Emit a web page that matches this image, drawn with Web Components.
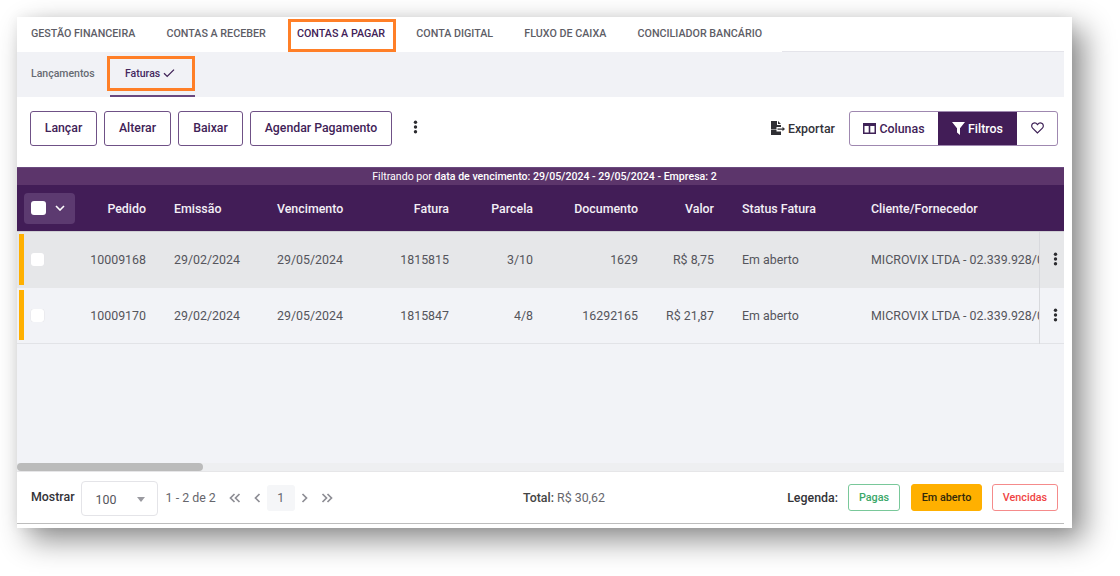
<!DOCTYPE html>
<html lang="pt-BR"><head><meta charset="utf-8"><title>Contas a pagar</title>
<style>
html,body{margin:0;padding:0;background:#fff;width:1120px;height:576px;overflow:hidden;font-family:Roboto,"Liberation Sans",sans-serif}
</style></head><body>
<app-page>
  <nav-tabs>
    <nav-tab>GESTÃO FINANCEIRA</nav-tab><nav-tab>CONTAS A RECEBER</nav-tab><nav-tab active>CONTAS A PAGAR</nav-tab><nav-tab>CONTA DIGITAL</nav-tab><nav-tab>FLUXO DE CAIXA</nav-tab><nav-tab>CONCILIADOR BANCÁRIO</nav-tab>
  </nav-tabs>
  <sub-tabs></sub-tabs>
  <tool-bar></tool-bar>
  <data-table></data-table>
  <page-footer></page-footer>
</app-page>
<script>
function def(name, css, html, init){
  customElements.define(name, class extends HTMLElement{
    constructor(){super();const r=this.attachShadow({mode:'open'});r.innerHTML='<style>'+css+'</style>'+html;}
    connectedCallback(){if(init)init.call(this,this.shadowRoot);}
  });
}
const kebab='<svg width="5" height="14" viewBox="0 0 5 14"><circle cx="2.5" cy="2.2" r="1.7" fill="#2c2c30"/><circle cx="2.5" cy="7" r="1.7" fill="#2c2c30"/><circle cx="2.5" cy="11.8" r="1.7" fill="#2c2c30"/></svg>';

def('app-page',`:host{display:flex;flex-direction:column;box-sizing:border-box;width:1055px;height:511px;margin:17px 0 0 17px;padding:0 8px 4px 0;background:#fff;box-shadow:12px 12px 28px rgba(0,0,0,.45),0 0 12px rgba(0,0,0,.06)}`,'<slot></slot>');

def('nav-tabs',`:host{display:flex;height:35px;box-sizing:border-box;flex:none}
.l{flex:1;border-bottom:1px solid #e4e4ea;}
.t{display:flex;padding-right:3px}`,'<div class="t"><slot></slot></div><div class="l"></div>');

def('nav-tab',`:host{display:flex;position:relative;align-items:center;padding:0 17.200px 3px 14px;font:500 10.720px Roboto,sans-serif;color:#5d5d66;white-space:nowrap;height:32px}
:host([active]){color:#3f2257}
:host([active])::after{content:"";position:absolute;left:5px;right:6px;top:2px;bottom:0;border:3px solid #ff7f27;box-sizing:border-box}`,'<slot></slot>');

def('sub-tabs',`:host{display:flex;height:45px;background:#f1f2f6;flex:none;font:500 10.500px Roboto,sans-serif;position:relative}
.a{color:#666a72;padding:0 0 3px 14px;display:flex;align-items:center;height:45px;width:93px;box-sizing:border-box}
.b{color:#45285f;display:flex;align-items:center;gap:3px;height:45px;width:85px;box-sizing:border-box;padding:0 0 3px 15px;position:relative}
.u{position:absolute;left:0;right:0;bottom:0;height:2px;background:#68487f}
.h{position:absolute;left:-3px;right:0;top:4px;height:35px;border:3px solid #ff7f27;box-sizing:border-box}`,
`<div class="a">Lançamentos</div><div class="b">Faturas <svg width="12" height="10" viewBox="0 0 12 10"><path d="M1 5.2 4.2 8.4 11 1.6" fill="none" stroke="#3f2257" stroke-width="1.3"/></svg><i class="h"></i><i class="u"></i></div>`);

def('act-btn',`:host{display:inline-flex;align-items:center;justify-content:center;height:35px;box-sizing:border-box;border:1px solid #6f5186;border-radius:3px;font:500 12.300px Roboto,sans-serif;color:#3f2257;background:#fff}`,'<slot></slot>');

def('tool-bar',`:host{display:flex;align-items:center;height:70px;flex:none;padding:0 6px 8px 13px;box-sizing:border-box}
.g{display:flex;gap:7px}
.k{margin-left:21px;display:flex;margin-top:-3px}
.s{flex:1}
.e{display:flex;align-items:center;gap:3px;font:500 12.400px Roboto,sans-serif;color:#33333a;margin-right:14px}
.grp{display:flex;height:35px;box-sizing:border-box;border:1px solid #9f88b0;border-radius:3px;overflow:hidden;font:500 12.400px Roboto,sans-serif;color:#3f2257}
.grp div{display:flex;align-items:center;justify-content:center;gap:3px}
.c{width:88px}.f{width:79px;background:#421d57;color:#fff}.h{width:40px}`,
`<div class="g"><act-btn style="width:67px">Lançar</act-btn><act-btn style="width:67px">Alterar</act-btn><act-btn style="width:65px">Baixar</act-btn><act-btn style="width:142px">Agendar Pagamento</act-btn></div>
<div class="k">${kebab}</div><div class="s"></div>
<div class="e"><svg width="14" height="14" viewBox="0 0 14 14"><path d="M0 0H6V4H10V6H5.500V8.500H0Z M7 0 10 3H7Z M0 9H5.500V10.500H10V14H0Z" fill="#2e2e33"/><path d="M6.500 7.500H11.500V5.800L14 8 11.500 10.200V8.700H6.500Z" fill="#2e2e33"/></svg>Exportar</div>
<div class="grp"><div class="c"><svg width="13" height="11" viewBox="0 0 13 11"><path fill-rule="evenodd" d="M0 0H13V11H0ZM1.500 3V9.500H5.700V3ZM7.300 3V9.500H11.500V3Z" fill="#3f2257"/></svg>Colunas</div>
<div class="f"><svg width="13" height="13" viewBox="0 0 13 13"><path d="M0 0H13L8 6.200V13L5 10.500V6.200Z" fill="#fff"/></svg>Filtros</div>
<div class="h"><svg width="13" height="12" viewBox="0 0 13 12"><path d="M6.500 11 1.600 6.100C.2 4.700.5 2.600 1.800 1.600 3.200.6 5.200.9 6.500 2.600 7.800.9 9.800.6 11.200 1.600 12.500 2.600 12.800 4.700 11.400 6.100Z" fill="none" stroke="#3f2257" stroke-width="1.200"/></svg></div></div>`);

const cols='59px 84px 103px 103px 97px 84px 105px 76px 129px 182px 25px';
const check=()=>`<span class="cb"></span>`;
function row(d,cls){
  return `<div class="row ${cls}"><i class="st"></i><div class="c sel">${check()}</div><div class="c r">${d[0]}</div><div class="c">${d[1]}</div><div class="c">${d[2]}</div><div class="c r">${d[3]}</div><div class="c r">${d[4]}</div><div class="c r">${d[5]}</div><div class="c r">${d[6]}</div><div class="c">Em aberto</div><div class="c cli"><span>MICROVIX LTDA - 02.339.928/0</span></div><div class="c act">${kebab}</div></div>`;
}
def('data-table',`:host{display:flex;flex-direction:column;flex:1;min-height:0;font:400 12.400px Roboto,sans-serif;color:#55555c;background:#f2f3f7}
.fb{height:18px;background:#5c356b;color:#fff;font-size:10.600px;display:flex;align-items:center;justify-content:center;padding-left:8px;flex:none;white-space:pre;border-top:1px solid #6a4a7e;box-sizing:border-box}
.fb b{font-weight:500}
.hd,.row{display:grid;grid-template-columns:${cols};align-items:center}
.hd{height:47px;background:#421d57;color:#f3eff6;font-weight:500;border-bottom:1px solid #cfcfd3;box-sizing:border-box;flex:none}
.c{padding:0 14px;white-space:nowrap;overflow:hidden}
.r{text-align:right}
.chip{margin-left:7px;width:51px;height:31px;background:#5c3a70;border-radius:4px;display:flex;align-items:center;padding-left:7px;box-sizing:border-box;gap:9px}
.row{height:56px;position:relative;flex:none;padding-bottom:2px;box-sizing:border-box}
.r1{background:#e6e7e9}.r2{background:#f2f3f7;border-bottom:1px solid #e2e3e7}
.st{position:absolute;left:2px;top:2px;bottom:3px;width:5px;background:#ffb000}
.sel{padding:0 0 0 14px;display:flex}
.cb{display:block;width:13px;height:13px;background:#fff;border-radius:3px;box-shadow:0 0 0 .5px #e4e4e8}
.hd .cb{width:15px;height:14px;box-shadow:none}
.cli{padding-right:0}.cli span{display:block;overflow:hidden}
.act{padding:0 0 3px 7px;margin-bottom:-2px;height:56px;display:flex;align-items:center;justify-content:center;border-left:1px solid #d8d9dd;box-sizing:border-box}
.sp{flex:1}
.sb{height:8px;background:#eeeff1;flex:none}
.sb i{display:block;width:186px;height:8px;border-radius:4px;background:#bbb}`,
`<div class="fb">Filtrando por <b>data de vencimento: 29/05/2024 - 29/05/2024 - Empresa: 2</b></div>
<div class="hd"><div class="chip">${check()}<svg width="10" height="6" viewBox="0 0 10 6"><path d="M1 1 5 5 9 1" fill="none" stroke="#fff" stroke-width="1.600"/></svg></div><div class="c r">Pedido</div><div class="c">Emissão</div><div class="c">Vencimento</div><div class="c r">Fatura</div><div class="c r">Parcela</div><div class="c r">Documento</div><div class="c r">Valor</div><div class="c">Status Fatura</div><div class="c cli">Cliente/Fornecedor</div><div></div></div>
${row(['10009168','29/02/2024','29/05/2024','1815815','3/10','1629','R$ 8,75'],'r1')}
${row(['10009170','29/02/2024','29/05/2024','1815847','4/8','16292165','R$ 21,87'],'r2')}
<div class="sp"></div><div class="sb"><i></i></div>`);

def('leg-tag',`:host{display:inline-flex;align-items:center;justify-content:center;height:27px;box-sizing:border-box;border-radius:3px;font:500 10.800px Roboto,sans-serif;border:1px solid;background:#fff}
:host([k=p]){width:52px;color:#3aa768;border-color:#79c89a}
:host([k=a]){width:71px;color:#33290a;background:#ffb000;border-color:#ffb000}
:host([k=v]){width:66px;color:#ef4444;border-color:#f58b8b}`,'<slot></slot>');

const pg=(d)=>`<svg width="12" height="10" viewBox="0 0 12 10"><path d="${d}" fill="none" stroke="#8d8d94" stroke-width="1.700"/></svg>`;
const pg1=(d)=>`<svg width="7" height="10" viewBox="0 0 7 10"><path d="${d}" fill="none" stroke="#8d8d94" stroke-width="1.700"/></svg>`;
def('page-footer',`:host{display:flex;align-items:center;justify-content:space-between;height:53px;box-sizing:border-box;flex:none;padding:0 6px 0 14px;background:#fff;border-top:1px solid #e6e6e8;border-bottom:1px solid #bdbdbd;font:400 12.400px Roboto,sans-serif;color:#66666c}
.l,.rr{display:flex;align-items:center}
.m{font-weight:500;color:#333338;margin-top:-2px}
.sel{width:77px;height:35px;box-sizing:border-box;border:1px solid #e4e4e8;border-radius:4px;margin:1px 8px 0 6px;display:flex;align-items:center;justify-content:space-between;padding:2px 12px 0 14px;color:#55555c}
.tri{width:0;height:0;border:4px solid transparent;border-top:5px solid #9a9aa0;border-bottom:0}
.pager{display:flex;align-items:center;margin-left:13px}
.p1{display:flex;align-items:center;justify-content:center;width:28px;height:26px;background:#f5f6f8;border-radius:3px;margin:0 6px;color:#66666c}
.pager svg{display:block}
.t{margin-left:8px}
.t b{font-weight:500;color:#444}
.rr b{font-weight:500;color:#333338;margin-right:10px}`,
`<div class="l"><span class="m">Mostrar</span><div class="sel">100<i class="tri"></i></div><span>1 - 2 de 2</span>
<div class="pager">${pg('M5.500 1 1.500 5 5.500 9M10.500 1 6.500 5 10.500 9')}<span style="width:13px"></span>${pg1('M5.500 1 1.500 5 5.500 9')}<div class="p1">1</div>${pg1('M1.500 1 5.500 5 1.500 9')}<span style="width:13px"></span>${pg('M1.500 1 5.500 5 1.500 9M6.500 1 10.500 5 6.500 9')}</div></div>
<div class="t"><b>Total:</b> R$ 30,62</div>
<div class="rr"><b>Legenda:</b><leg-tag k="p">Pagas</leg-tag><span style="width:11px"></span><leg-tag k="a">Em aberto</leg-tag><span style="width:10px"></span><leg-tag k="v">Vencidas</leg-tag></div>`);
</script>
</body></html>
